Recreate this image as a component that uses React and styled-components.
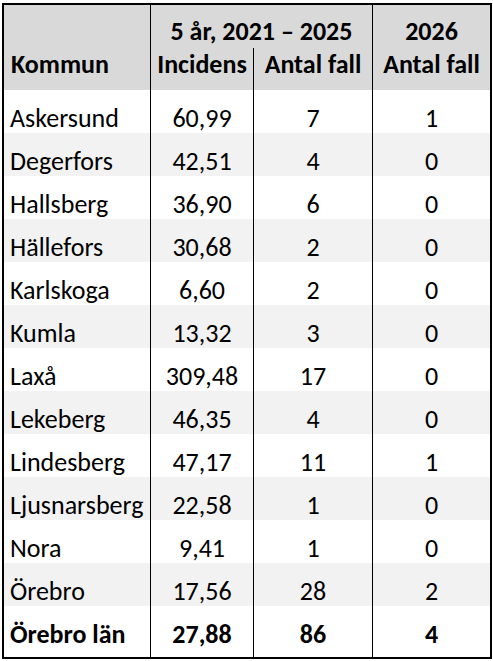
import React from "react";
import styled, { createGlobalStyle } from "styled-components";

const Global = createGlobalStyle`
  html, body { margin: 0; padding: 0; background: #ffffff; }
  body { font-family: Carlito, "Open Sans", sans-serif; color: #000; }
`;

const Page = styled.div`
  padding: 3px 0 0 2px;
`;

const Table = styled.table`
  width: 490px;
  table-layout: fixed;
  border-collapse: separate;
  border-spacing: 0;
  border: 2px solid #000;
  font-size: 26px;
  line-height: 26px;
`;

const Head = styled.th`
  background: #d9d9d9;
  font-weight: 700;
  text-align: ${(p) => (p.$align === "left" ? "left" : "center")};
  vertical-align: bottom;
  padding: ${(p) => (p.$top ? "13px 3px 4px" : "3px 3px 13px")};
  padding-left: ${(p) => (p.$align === "left" ? "7px" : "3px")};
  border-left: ${(p) => (p.$line ? "1px solid #000" : "none")};
  white-space: nowrap;
`;

const Cell = styled.td`
  background: ${(p) => (p.$shade ? "#f2f2f2" : "#ffffff")};
  font-weight: ${(p) => (p.$bold ? 700 : 400)};
  text-align: ${(p) => (p.$align === "left" ? "left" : "center")};
  vertical-align: bottom;
  padding: 15px 3px ${(p) => (p.$last ? "10px" : "2px")};
  padding-left: ${(p) => (p.$align === "left" ? "6px" : "3px")};
  border-left: ${(p) => (p.$line ? "1px solid #000" : "none")};
  white-space: nowrap;
`;

const rows = [
  ["Askersund", "60,99", "7", "1"],
  ["Degerfors", "42,51", "4", "0"],
  ["Hallsberg", "36,90", "6", "0"],
  ["Hällefors", "30,68", "2", "0"],
  ["Karlskoga", "6,60", "2", "0"],
  ["Kumla", "13,32", "3", "0"],
  ["Laxå", "309,48", "17", "0"],
  ["Lekeberg", "46,35", "4", "0"],
  ["Lindesberg", "47,17", "11", "1"],
  ["Ljusnarsberg", "22,58", "1", "0"],
  ["Nora", "9,41", "1", "0"],
  ["Örebro", "17,56", "28", "2"],
  ["Örebro län", "27,88", "86", "4"],
];

export default function App() {
  return (
    <Page>
      <Global />
      <Table>
        <colgroup>
          <col style={{ width: 146 }} />
          <col style={{ width: 103 }} />
          <col style={{ width: 119 }} />
          <col style={{ width: 118 }} />
        </colgroup>
        <thead>
          <tr>
            <Head rowSpan={2} $align="left">Kommun</Head>
            <Head colSpan={2} $top $line>5 år, 2021 – 2025</Head>
            <Head $top $line>2026</Head>
          </tr>
          <tr>
            <Head $line>Incidens</Head>
            <Head $line>Antal fall</Head>
            <Head $line>Antal fall</Head>
          </tr>
        </thead>
        <tbody>
          {rows.map((r, i) => {
            const last = i === rows.length - 1;
            const shade = i % 2 === 1;
            return (
              <tr key={r[0]}>
                <Cell $align="left" $shade={shade} $bold={last} $last={last}>{r[0]}</Cell>
                <Cell $line $shade={shade} $bold={last} $last={last}>{r[1]}</Cell>
                <Cell $line $shade={shade} $bold={last} $last={last}>{r[2]}</Cell>
                <Cell $line $shade={shade} $bold={last} $last={last}>{r[3]}</Cell>
              </tr>
            );
          })}
        </tbody>
      </Table>
    </Page>
  );
}
